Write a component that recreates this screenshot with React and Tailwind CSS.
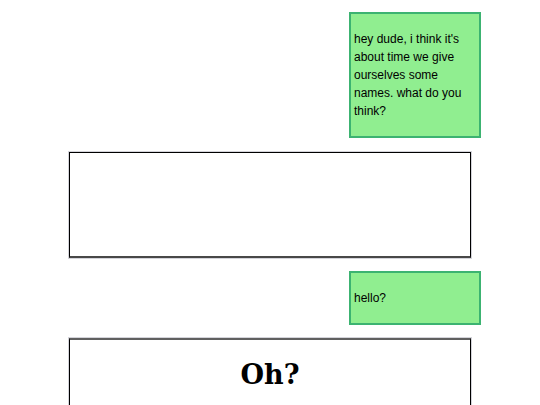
function Outgoing({ children }) {
  return (
    <div className="mr-[59px] w-[132px] self-end border-2 border-[#3cb371] bg-[#90ee90] px-[3px] py-4">
      <p className="font-['Liberation_Sans',Arial,sans-serif] text-[12px] leading-[18px]">{children}</p>
    </div>
  );
}

function Incoming({ className, children }) {
  return (
    <div className={`mx-[69px] min-h-[106px] border border-black shadow-[0_0_0_1px_#d4d4da] ${className}`}>
      {children}
    </div>
  );
}

export default function App() {
  return (
    <main className="flex h-screen flex-col overflow-hidden bg-white pt-3 text-black *:shrink-0">
      <Outgoing>hey dude, i think it's about time we give ourselves some names. what do you think?</Outgoing>
      <Incoming className="mt-[14px] border-b-2 border-b-[#484848]" />
      <div className="mt-[13px] flex flex-col">
        <Outgoing>hello?</Outgoing>
      </div>
      <Incoming className="mt-[13px] border-t-2 border-t-[#606060] pt-4">
        <h1 className="text-center font-['DejaVu_Serif',serif] text-[27px] leading-[38px] font-bold">Oh?</h1>
      </Incoming>
    </main>
  );
}
